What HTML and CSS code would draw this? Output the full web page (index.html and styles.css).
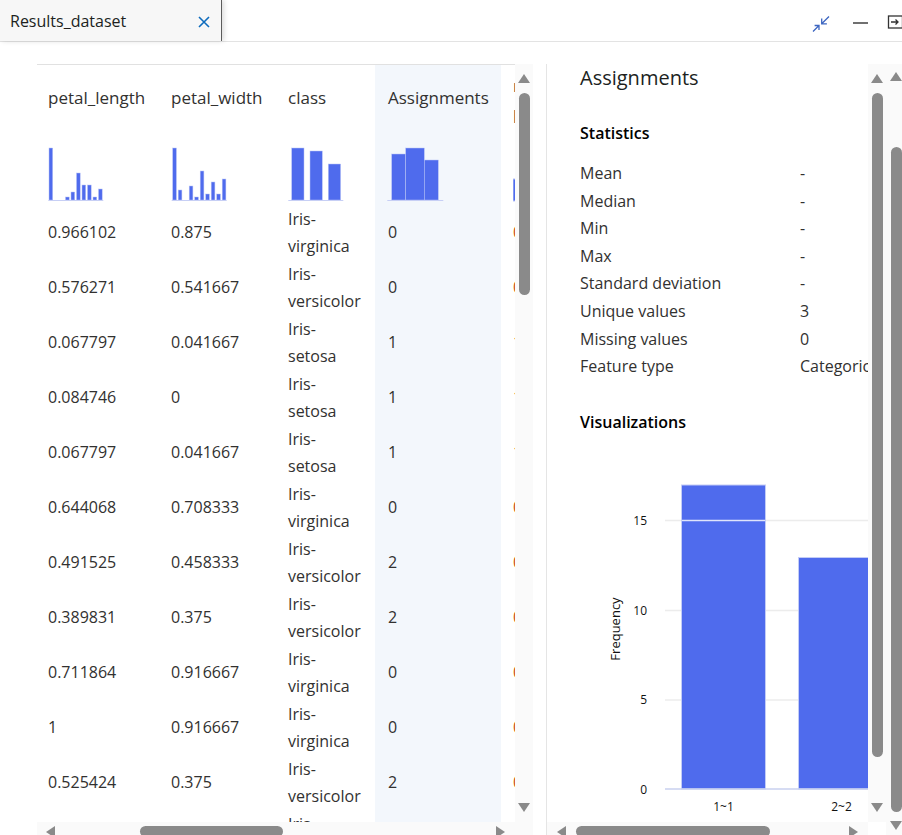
FILE: index.html
```html
<!DOCTYPE html>
<html>
<head>
<meta charset="utf-8">
<link rel="stylesheet" href="styles.css">
</head>
<body>
<div class="tabbar">
  <div class="tab">
    <span class="tab-title">Results_dataset</span>
    <svg class="tab-close" width="12" height="12" viewBox="0 0 12 12"><path d="M1 1 L11 11 M11 1 L1 11" stroke="#0f6cbd" stroke-width="1.6" fill="none"/></svg>
  </div>
  <div class="win-icons">
    <svg class="ic-collapse" width="18" height="18" viewBox="0 0 18 18"><g stroke="#3d66c1" stroke-width="1.3" fill="none"><path d="M17 1.5 L9.7 8.8 M9.7 3.6 L9.7 8.8 L14.9 8.8"/><path d="M1 16.5 L7 10.5 M2.6 10.5 L7 10.5 L7 14.9"/></g></svg>
    <svg class="ic-min" width="18" height="18" viewBox="0 0 18 18"><path d="M1 9 L16 9" stroke="#333" stroke-width="1.4"/></svg>
    <svg class="ic-exit" width="18" height="18" viewBox="0 0 18 18"><g stroke="#333" stroke-width="1.3" fill="none"><rect x="2.5" y="3" width="14" height="12"/><path d="M5 9 L12 9 M9.5 6.5 L12 9 L9.5 11.5"/></g></svg>
  </div>
</div>
<div class="main">
  <div class="left">
    <div class="left-top">
      <div class="grid-viewport">
        <div class="grid">
          <div class="cell hd"><div class="hd-title">petal_length</div>
            <svg class="hist" width="60" height="56" viewBox="0 0 60 56"><g fill="#4f6bed" stroke="#b8c3f6" stroke-width="0.5">
              <rect x="1" y="2" width="3.7" height="52"/><rect x="17.5" y="51" width="3.7" height="3"/><rect x="23" y="46" width="3.7" height="8"/><rect x="28.5" y="27" width="3.7" height="27"/><rect x="34" y="39" width="3.7" height="15"/><rect x="39.5" y="39" width="3.7" height="15"/><rect x="45" y="51" width="3.7" height="3"/><rect x="50.5" y="43" width="3.7" height="11"/></g>
              <line x1="0.3" y1="54.5" x2="55.3" y2="54.5" stroke="#c7cff5" stroke-width="1"/></svg>
          </div>
          <div class="cell hd"><div class="hd-title">petal_width</div>
            <svg class="hist" width="60" height="56" viewBox="0 0 60 56"><g fill="#4f6bed" stroke="#b8c3f6" stroke-width="0.5">
              <rect x="1.7" y="2" width="3.7" height="52"/><rect x="7.2" y="44" width="3.7" height="10"/><rect x="18.2" y="40" width="3.7" height="14"/><rect x="23.7" y="51" width="3.7" height="3"/><rect x="29.2" y="25" width="3.7" height="29"/><rect x="34.7" y="48" width="3.7" height="6"/><rect x="40.2" y="36" width="3.7" height="18"/><rect x="45.7" y="48" width="3.7" height="6"/><rect x="51.2" y="33" width="3.7" height="21"/></g>
              <line x1="0.7" y1="54.5" x2="55.7" y2="54.5" stroke="#c7cff5" stroke-width="1"/></svg>
          </div>
          <div class="cell hd"><div class="hd-title">class</div>
            <svg class="hist" width="60" height="56" viewBox="0 0 60 56"><g fill="#4f6bed" stroke="#b8c3f6" stroke-width="0.5">
              <rect x="3.7" y="2" width="12.3" height="52"/><rect x="22" y="5" width="12.3" height="49"/><rect x="40.3" y="18" width="12.3" height="36"/></g>
              <line x1="0.3" y1="54.5" x2="55.3" y2="54.5" stroke="#c7cff5" stroke-width="1"/></svg>
          </div>
          <div class="cell hd hl c4"><div class="hd-title">Assignments</div>
            <svg class="hist" width="60" height="56" viewBox="0 0 60 56"><g fill="#4f6bed" stroke="#b8c3f6" stroke-width="0.5">
              <rect x="3.7" y="8" width="14" height="46"/><rect x="17.7" y="2" width="18.6" height="52"/><rect x="36.3" y="14" width="14" height="40"/></g>
              <line x1="-0.7" y1="54.5" x2="55.3" y2="54.5" stroke="#c7cff5" stroke-width="1"/></svg>
          </div>
          <div class="cell hd hd5 c5"><div class="hd-title2">raw<br>probability</div>
            <svg class="hist5" width="60" height="56" viewBox="0 0 60 56"><rect x="0" y="32" width="10" height="22" fill="#4f6bed" stroke="#b8c3f6" stroke-width="1"/></svg>
          </div>

          <div class="cell">0.966102</div><div class="cell">0.875</div><div class="cell two">Iris-<br>virginica</div><div class="cell hl c4">0</div><div class="cell c5 v5">0.35</div>
          <div class="cell">0.576271</div><div class="cell">0.541667</div><div class="cell two">Iris-<br>versicolor</div><div class="cell hl c4">0</div><div class="cell c5 v5">0.61</div>
          <div class="cell">0.067797</div><div class="cell">0.041667</div><div class="cell two">Iris-<br>setosa</div><div class="cell hl c4">1</div><div class="cell c5 v5">1</div>
          <div class="cell">0.084746</div><div class="cell">0</div><div class="cell two">Iris-<br>setosa</div><div class="cell hl c4">1</div><div class="cell c5 v5">1</div>
          <div class="cell">0.067797</div><div class="cell">0.041667</div><div class="cell two">Iris-<br>setosa</div><div class="cell hl c4">1</div><div class="cell c5 v5">1</div>
          <div class="cell">0.644068</div><div class="cell">0.708333</div><div class="cell two">Iris-<br>virginica</div><div class="cell hl c4">0</div><div class="cell c5 v5">0.72</div>
          <div class="cell">0.491525</div><div class="cell">0.458333</div><div class="cell two">Iris-<br>versicolor</div><div class="cell hl c4">2</div><div class="cell c5 v5">0.54</div>
          <div class="cell">0.389831</div><div class="cell">0.375</div><div class="cell two">Iris-<br>versicolor</div><div class="cell hl c4">2</div><div class="cell c5 v5">0.66</div>
          <div class="cell">0.711864</div><div class="cell">0.916667</div><div class="cell two">Iris-<br>virginica</div><div class="cell hl c4">0</div><div class="cell c5 v5">0.81</div>
          <div class="cell">1</div><div class="cell">0.916667</div><div class="cell two">Iris-<br>virginica</div><div class="cell hl c4">0</div><div class="cell c5 v5">0.77</div>
          <div class="cell">0.525424</div><div class="cell">0.375</div><div class="cell two">Iris-<br>versicolor</div><div class="cell hl c4">2</div><div class="cell c5 v5">0.58</div>
          <div class="cell">0.542373</div><div class="cell">0.5</div><div class="cell two">Iris-<br>versicolor</div><div class="cell hl c4">2</div><div class="cell c5 v5">0.49</div>
        </div>
      </div>
      <div class="vscroll vs-left">
        <div class="arr-up"></div>
        <div class="thumb-v th-left"></div>
        <div class="spacer"></div>
        <div class="arr-down"></div>
      </div>
    </div>
    <div class="hscroll hs-left">
      <div class="arr-left"></div>
      <div class="thumb-h th-hleft"></div>
      <div class="spacer"></div>
      <div class="arr-right"></div>
    </div>
  </div>
  <div class="divider"></div>
  <div class="right">
    <div class="right-inner">
      <div class="details">
        <div class="d-title">Assignments</div>
        <div class="sec-h">Statistics</div>
        <div class="stats">
          <div class="s-k">Mean</div><div class="s-v">-</div>
          <div class="s-k">Median</div><div class="s-v">-</div>
          <div class="s-k">Min</div><div class="s-v">-</div>
          <div class="s-k">Max</div><div class="s-v">-</div>
          <div class="s-k">Standard deviation</div><div class="s-v">-</div>
          <div class="s-k">Unique values</div><div class="s-v">3</div>
          <div class="s-k">Missing values</div><div class="s-v">0</div>
          <div class="s-k">Feature type</div><div class="s-v">Categorical</div>
        </div>
        <div class="sec-h sec-viz">Visualizations</div>
        <svg class="chart" width="288" height="387" viewBox="0 0 288 387">
          <g stroke="#ececec" stroke-width="1.5">
            <line x1="85" y1="87.5" x2="288" y2="87.5"/>
            <line x1="85" y1="177.5" x2="288" y2="177.5"/>
            <line x1="85" y1="267" x2="288" y2="267"/>
          </g>
          <rect x="101.5" y="52" width="84" height="304" fill="#4f6bed" stroke="#c3ccf6" stroke-width="1"/>
          <line x1="102" y1="87.5" x2="185" y2="87.5" stroke="#dfe4fb" stroke-width="1.5"/>
          <rect x="218.5" y="124.5" width="90" height="231.5" fill="#4f6bed" stroke="#c3ccf6" stroke-width="1"/>
          <line x1="85" y1="356" x2="288" y2="356" stroke="#c8d0ef" stroke-width="1.5"/>
          <g class="ax" text-anchor="end">
            <text x="67" y="91.5">15</text>
            <text x="67" y="181.5">10</text>
            <text x="67" y="271">5</text>
            <text x="67" y="360.5">0</text>
          </g>
          <text class="ax-title" transform="translate(40,196) rotate(-90)" text-anchor="middle">Frequency</text>
          <g class="ax" text-anchor="middle">
            <text x="143.5" y="378">1~1</text>
            <text x="261.5" y="378">2~2</text>
          </g>
        </svg>
      </div>
      <div class="hscroll hs-right">
        <div class="arr-left"></div>
        <div class="thumb-h th-hright"></div>
        <div class="spacer"></div>
        <div class="arr-right"></div>
      </div>
    </div>
    <div class="vscroll vs-inner">
      <div class="arr-up"></div>
      <div class="thumb-v th-inner"></div>
      <div class="spacer"></div>
      <div class="arr-down"></div>
    </div>
    <div class="vscroll vs-outer">
      <div class="arr-up"></div>
      <div class="thumb-v th-outer"></div>
      <div class="spacer"></div>
      <div class="arr-down"></div>
    </div>
  </div>
</div>
</body>
</html>
```
FILE: styles.css
```css
* { box-sizing: border-box; }
html, body { margin: 0; padding: 0; }
body {
  width: 902px;
  height: 835px;
  overflow: hidden;
  background: #fff;
  color: #323130;
  font-family: "Segoe UI", "Open Sans", "Noto Sans", sans-serif;
  font-size: 16px;
}

/* tab bar */
.tabbar {
  height: 42px;
  display: flex;
  border-bottom: 1px solid #e3e3e3;
}
.tab {
  width: 222px;
  height: 41px;
  flex-shrink: 0;
  background: #f7f7f7;
  border-right: 1px solid #5c5c5c;
  box-shadow: 2px 0 5px rgba(0, 0, 0, 0.14);
  display: flex;
  align-items: center;
  padding-left: 10px;
}
.tab-title { flex: 1; font-size: 16px; color: #201f1e; }
.tab-close { margin-right: 11px; margin-top: 2px; }
.win-icons {
  margin-left: auto;
  width: 90px;
  display: flex;
  align-items: flex-start;
  flex-shrink: 0;
}
.win-icons svg { flex-shrink: 0; display: block; }
.ic-collapse { margin-top: 14.5px; margin-right: 22px; }
.ic-min { margin-top: 13.5px; margin-right: 16px; }
.ic-exit { margin-top: 12.5px; }

/* main */
.main { display: flex; height: 793px; }
.left {
  width: 546px;
  flex-shrink: 0;
  padding: 22px 13px 0 37px;
  display: flex;
  flex-direction: column;
}
.left-top { flex: 1; display: flex; min-height: 0; }
.grid-viewport {
  width: 478px;
  border-top: 1px solid #e1e1e1;
  overflow: hidden;
}
.grid {
  display: grid;
  grid-template-columns: 123px 117px 98px 126px 140px;
  grid-template-rows: 140px;
  grid-auto-rows: 55px;
  width: 604px;
}
.cell {
  padding-left: 11px;
  display: flex;
  align-items: center;
  font-size: 16px;
  line-height: 27px;
  white-space: nowrap;
}
.cell.c4 { padding-left: 13px; }
.cell.c5 { padding-left: 12px; }
.hl { background: #f3f7fc; }
.v5 { color: #ca5010; }
.two { white-space: normal; }
.hd {
  flex-direction: column;
  align-items: flex-start;
  justify-content: flex-start;
  padding-top: 22px;
}
.hd-title { font-size: 17px; line-height: 22px; color: #323130; }
.hist { display: block; margin-top: 37px; overflow: visible; }
.hd5 { padding-top: 7px; }
.hd-title2 { font-size: 17px; line-height: 27px; }
.hist5 { display: block; margin-top: 21px; }

/* scrollbars */
.vscroll {
  width: 18px;
  flex-shrink: 0;
  background: #fafafa;
  display: flex;
  flex-direction: column;
  align-items: center;
  padding: 10px 0;
}
.arr-up {
  width: 0; height: 0;
  border-left: 6.5px solid transparent;
  border-right: 6.5px solid transparent;
  border-bottom: 9px solid #8a8a8a;
}
.arr-down {
  width: 0; height: 0;
  border-left: 6.5px solid transparent;
  border-right: 6.5px solid transparent;
  border-top: 9px solid #8a8a8a;
}
.thumb-v {
  width: 11px;
  border-radius: 6px;
  background: #8a8a8a;
  margin-top: 10px;
}
.spacer { flex: 1; }
.th-left { height: 202px; }
.th-inner { height: 664px; }
.vs-inner { margin-bottom: 13px; }
.vs-outer {
  width: 16px;
  align-items: flex-start;
  padding: 8px 0 5px 4px;
}
.th-outer { height: 665px; margin-top: 66px; margin-left: 1px; }

.hscroll {
  height: 13px;
  flex-shrink: 0;
  background: #fafafa;
  display: flex;
  align-items: flex-start;
}
.arr-left {
  width: 0; height: 0;
  margin-top: 4px;
  border-top: 6px solid transparent;
  border-bottom: 6px solid transparent;
  border-right: 9px solid #8a8a8a;
}
.arr-right {
  width: 0; height: 0;
  margin-top: 4px;
  border-top: 6px solid transparent;
  border-bottom: 6px solid transparent;
  border-left: 9px solid #8a8a8a;
}
.thumb-h {
  height: 11px;
  margin-top: 4px;
  border-radius: 6px;
  background: #8a8a8a;
}
.hs-left { padding: 0 28px 0 9px; }
.th-hleft { margin-left: 85px; width: 143px; }
.hs-right { padding: 0 10px 0 10px; }
.th-hright { margin-left: 10px; width: 194px; }

.divider {
  width: 1px;
  flex-shrink: 0;
  background: #e5e5e5;
  margin-top: 22px;
}

/* right panel */
.right {
  flex: 1;
  display: flex;
  padding-top: 22px;
  min-width: 0;
}
.right-inner {
  width: 321px;
  flex-shrink: 0;
  display: flex;
  flex-direction: column;
}
.details {
  flex: 1;
  min-height: 0;
  overflow: hidden;
  padding-left: 33px;
}
.d-title { font-size: 20px; line-height: 28px; color: #201f1e; }
.sec-h {
  font-size: 16px;
  line-height: 22px;
  font-weight: 600;
  color: #000;
  margin-top: 30px;
}
.stats {
  margin-top: 16px;
  display: grid;
  grid-template-columns: 220px 200px;
  grid-auto-rows: 27.6px;
  line-height: 27.6px;
  white-space: nowrap;
}
.s-k, .s-v { color: #323130; }
.sec-viz { margin-top: 30px; }
.chart { display: block; }
.ax { font-size: 12px; fill: #111; }
.ax-title { font-size: 13px; fill: #111; }
```
